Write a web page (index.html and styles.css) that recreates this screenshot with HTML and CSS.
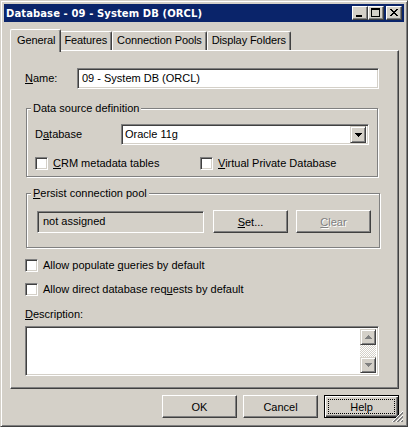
FILE: index.html
```html
<!DOCTYPE html>
<html>

<head>
    <meta charset="UTF-8">
    <title>Database - 09 - System DB (ORCL)</title>
    <link rel="stylesheet" href="styles.css">
</head>

<body>
    <div class="window">
        <div class="titlebar">
            <span class="title">Database - 09 - System DB (ORCL)</span>
            <div class="caption-btns">
                <span class="cap-btn">
                    <svg width="14" height="12" viewBox="0 0 14 12" shape-rendering="crispEdges">
                        <rect x="3" y="8" width="6" height="2"></rect>
                    </svg>
                </span>
                <span class="cap-btn">
                    <svg width="14" height="12" viewBox="0 0 14 12" shape-rendering="crispEdges">
                        <path d="M2 1h9v2h-9z M2 3h1v7h-1z M10 3h1v7h-1z M2 9h9v1h-9z"></path>
                    </svg>
                </span>
                <span class="cap-btn close">
                    <svg width="14" height="12" viewBox="0 0 14 12" shape-rendering="crispEdges">
                        <path d="M3 2h2v1h-2z M9 2h2v1h-2z M4 3h2v1h-2z M8 3h2v1h-2z M5 4h4v1h-4z M6 5h2v1h-2z M5 6h4v1h-4z M4 7h2v1h-2z M8 7h2v1h-2z M3 8h2v1h-2z M9 8h2v1h-2z"></path>
                    </svg>
                </span>
            </div>
        </div>

        <div class="client">
            <div class="tabs">
                <div class="tab active">General</div>
                <div class="tab">Features</div>
                <div class="tab">Connection Pools</div>
                <div class="tab">Display Folders</div>
            </div>

            <div class="panel">
                <div class="row name-row">
                    <span class="label name-label"><u>N</u>ame:</span>
                    <div class="field name-field">09 - System DB (ORCL)</div>
                </div>

                <fieldset class="group source-group">
                    <legend>Data source definition</legend>
                    <div class="row">
                        <span class="label db-label">D<u>a</u>tabase</span>
                        <div class="field combo">
                            <span class="combo-text">Oracle 11g</span>
                            <span class="combo-btn">
                                <svg width="7" height="4" viewBox="0 0 7 4" shape-rendering="crispEdges">
                                    <path d="M0 0h7v1h-7z M1 1h5v1h-5z M2 2h3v1h-3z M3 3h1v1h-1z"></path>
                                </svg>
                            </span>
                        </div>
                    </div>
                    <div class="row check-row">
                        <span class="check crm"><span class="box"></span><span><u>C</u>RM metadata tables</span></span>
                        <span class="check"><span class="box"></span><span><u>V</u>irtual Private Database</span></span>
                    </div>
                </fieldset>

                <fieldset class="group pool-group">
                    <legend><u>P</u>ersist connection pool</legend>
                    <div class="row">
                        <div class="field disabled pool-field">not assigned</div>
                        <span class="btn"><u>S</u>et...</span>
                        <span class="btn disabled"><u>C</u>lear</span>
                    </div>
                </fieldset>

                <span class="check option"><span class="box"></span><span>Allow populate <u>q</u>ueries by default</span></span>
                <span class="check option"><span class="box"></span><span>Allow direct database req<u>u</u>ests by default</span></span>

                <span class="label desc-label"><u>D</u>escription:</span>
                <div class="field memo">
                    <div class="memo-text"></div>
                    <div class="scrollbar">
                        <span class="scroll-btn">
                            <svg width="7" height="4" viewBox="0 0 7 4" shape-rendering="crispEdges">
                                <path d="M3 0h1v1h-1z M2 1h3v1h-3z M1 2h5v1h-5z M0 3h7v1h-7z"></path>
                            </svg>
                        </span>
                        <span class="scroll-track"></span>
                        <span class="scroll-btn">
                            <svg width="7" height="4" viewBox="0 0 7 4" shape-rendering="crispEdges">
                                <path d="M0 0h7v1h-7z M1 1h5v1h-5z M2 2h3v1h-3z M3 3h1v1h-1z"></path>
                            </svg>
                        </span>
                    </div>
                </div>
            </div>

            <div class="footer">
                <span class="btn">OK</span>
                <span class="btn">Cancel</span>
                <span class="btn default"><span class="focus">Help</span></span>
            </div>
        </div>

        <!-- resize grip in the corner -->
        <svg class="grip" width="12" height="12" viewBox="0 0 12 12" shape-rendering="crispEdges">
            <path d="M11 0L0 11 M11 4L4 11 M11 8L8 11" stroke="#fff" stroke-width="1"></path>
            <path d="M11 1L1 11 M11 2L2 11 M11 5L5 11 M11 6L6 11 M11 9L9 11 M11 10L10 11" stroke="#808080" stroke-width="1"></path>
        </svg>
    </div>
</body>

</html>
```

FILE: styles.css
```css
* {
    box-sizing: border-box;
}

html,
body {
    margin: 0;
    padding: 0;
}

body {
    font-family: "Liberation Sans", Arial, sans-serif;
    font-size: 11px;
    color: #000;
    background: #d4d0c8;
}

u {
    text-decoration: underline;
    text-underline-offset: 1px;
}

/* window frame */
.window {
    position: relative;
    width: 408px;
    height: 427px;
    background: #d4d0c8;
    border: 1px solid;
    border-color: #d4d0c8 #404040 #404040 #d4d0c8;
    box-shadow: inset 1px 1px #fff, inset -1px -1px #808080;
    padding: 3px;
    display: flex;
    flex-direction: column;
}

.titlebar {
    height: 18px;
    background: #0a246a;
    color: #fff;
    display: flex;
    align-items: center;
    justify-content: space-between;
    padding: 0 2px 0 2px;
}

.title {
    font-family: "DejaVu Sans", Verdana, sans-serif;
    font-weight: bold;
    font-size: 10px;
    letter-spacing: 0.1px;
}

.caption-btns {
    display: flex;
}

.cap-btn {
    width: 16px;
    height: 14px;
    background: #d4d0c8;
    border: 1px solid;
    border-color: #fff #404040 #404040 #fff;
    box-shadow: inset -1px -1px #808080;
    display: flex;
}

.cap-btn.close {
    margin-left: 2px;
}

/* client area */
.client {
    flex: 1;
    display: flex;
    flex-direction: column;
    padding: 7px 5px 0 6px;
}

.tabs {
    display: flex;
    align-items: flex-end;
    height: 21px;
    padding-left: 2px;
}

.tab {
    height: 19px;
    padding: 2px 4px 0 4px;
    border: 1px solid;
    border-bottom: none;
    border-color: #fff #404040 #fff #fff;
    border-radius: 2px 2px 0 0;
    box-shadow: inset -1px 0 #808080;
    white-space: nowrap;
    letter-spacing: -0.1px;
}

.tab.active {
    height: 23px;
    margin-bottom: -2px;
    margin-left: -2px;
    margin-right: -2px;
    padding: 4px 5px 0 6px;
    position: relative;
    z-index: 1;
    background: #d4d0c8;
}

.panel {
    flex: 1;
    display: flex;
    flex-direction: column;
    align-items: flex-start;
    border: 1px solid;
    border-color: #fff #404040 #404040 #fff;
    box-shadow: inset -1px -1px #808080;
    padding: 17px 19px 0 14px;
}

.row {
    display: flex;
    align-items: center;
    width: 100%;
}

.label {
    line-height: 13px;
    white-space: nowrap;
}

.name-label {
    width: 52px;
}

.db-label {
    width: 86px;
}

/* sunken edit box */
.field {
    background: #fff;
    border: 1px solid;
    border-color: #808080 #fff #fff #808080;
    box-shadow: inset 1px 1px #404040, inset -1px -1px #d4d0c8;
    padding: 3px 4px;
    line-height: 13px;
    white-space: nowrap;
}

.field.disabled {
    background: #d4d0c8;
}

.name-field {
    flex: 1;
    height: 21px;
}

.combo {
    flex: 1;
    height: 21px;
    display: flex;
    align-items: center;
    padding: 2px 2px 2px 3px;
}

.combo-text {
    flex: 1;
}

.combo-btn {
    width: 16px;
    height: 17px;
    border: 1px solid;
    border-color: #d4d0c8 #404040 #404040 #d4d0c8;
    box-shadow: inset 1px 1px #fff, inset -1px -1px #808080;
    background: #d4d0c8;
    display: flex;
    align-items: center;
    justify-content: center;
}

/* etched group box */
.group {
    align-self: stretch;
    margin: 13px 1px 0 1px;
    border: 1px solid #808080;
    box-shadow: inset 1px 1px #fff, 1px 1px #fff;
    padding: 9px 8px 6px 8px;
}

.group legend {
    line-height: 13px;
    padding: 0 2px;
    margin-left: -4px;
    background: #d4d0c8;
}

.check-row {
    margin-top: 12px;
}

.check {
    display: flex;
    align-items: center;
    gap: 5px;
    line-height: 13px;
    white-space: nowrap;
}

.check.crm {
    width: 165px;
}

.box {
    width: 13px;
    height: 13px;
    background: #fff;
    border: 1px solid;
    border-color: #808080 #fff #fff #808080;
    box-shadow: inset 1px 1px #404040, inset -1px -1px #d4d0c8;
}

.pool-group {
    margin-top: 10px;
    padding: 10px 8px 14px 10px;
}

.pool-group legend {
    margin-left: -6px;
}

.pool-field {
    width: 167px;
    height: 22px;
    padding: 3px 5px;
    margin-right: 9px;
}

/* raised push button */
.btn {
    width: 75px;
    height: 23px;
    border: 1px solid;
    border-color: #fff #404040 #404040 #fff;
    box-shadow: inset -1px -1px #808080;
    display: flex;
    align-items: center;
    justify-content: center;
    background: #d4d0c8;
}

.pool-group .btn + .btn {
    margin-left: 8px;
}

.btn.disabled {
    color: #808080;
    text-shadow: 1px 1px #fff;
}

.option {
    margin-top: 11px;
}

.desc-label {
    margin-top: 12px;
}

.memo {
    align-self: stretch;
    height: 50px;
    margin-top: 5px;
    padding: 2px;
    display: flex;
}

.memo-text {
    flex: 1;
}

.scrollbar {
    width: 16px;
    display: flex;
    flex-direction: column;
}

.scroll-btn {
    height: 16px;
    border: 1px solid;
    border-color: #d4d0c8 #404040 #404040 #d4d0c8;
    box-shadow: inset 1px 1px #fff, inset -1px -1px #808080;
    background: #d4d0c8;
    display: flex;
    align-items: center;
    justify-content: center;
}

.scroll-btn svg {
    fill: #808080;
}

.scroll-track {
    flex: 1;
    background: repeating-conic-gradient(#fff 0 25%, #d4d0c8 0 50%) 0 0 / 2px 2px;
}

.footer {
    display: flex;
    justify-content: flex-end;
    gap: 6px;
    padding: 6px 0 5px 0;
}

.btn.default {
    border: 1px solid #000;
    box-shadow: inset 1px 1px #fff, inset -1px -1px #404040, inset -2px -2px #808080;
    padding: 3px;
}

.focus {
    flex: 1;
    align-self: stretch;
    display: flex;
    align-items: center;
    justify-content: center;
    border: 1px dotted #000;
}

.grip {
    position: absolute;
    right: 3px;
    bottom: 3px;
}
```
